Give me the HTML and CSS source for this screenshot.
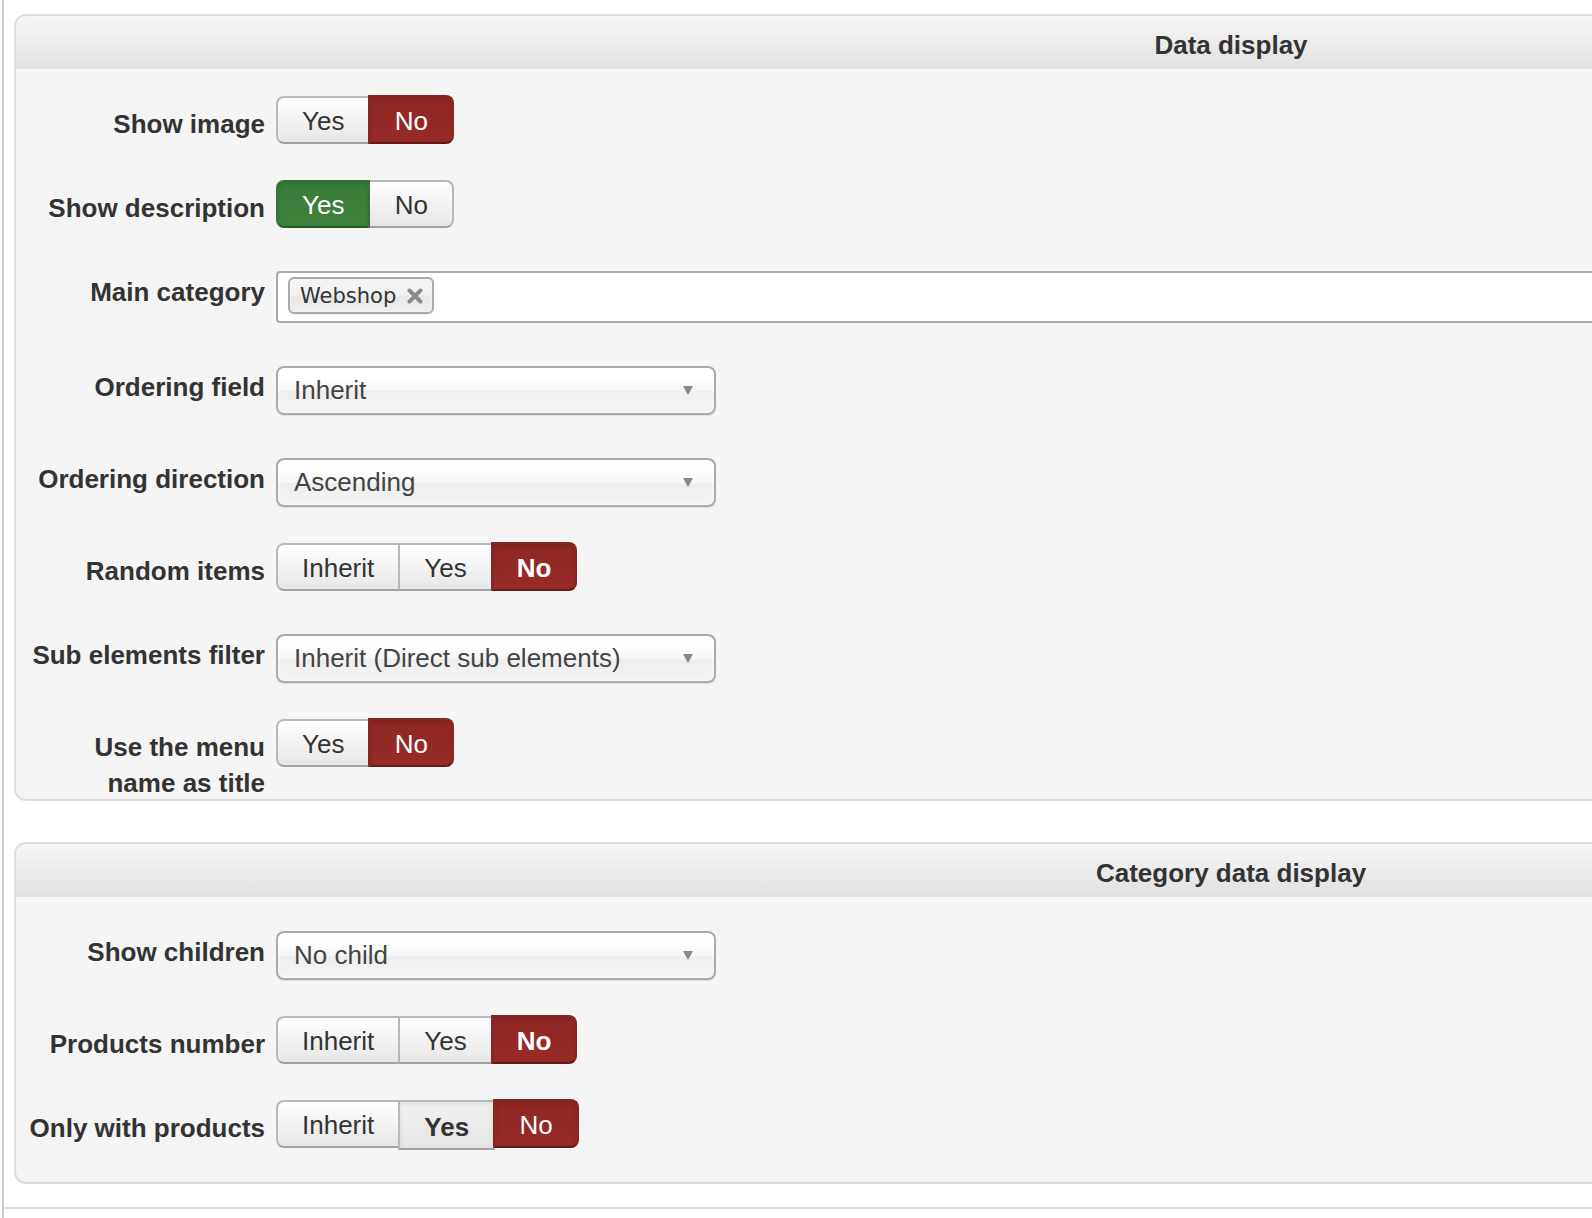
FILE: index.html
```html
<!DOCTYPE html>
<html lang="en">
<head>
<meta charset="utf-8">
<title>Menu item options</title>
<link rel="stylesheet" href="styles.css">
</head>
<body>
<div class="page">

  <section class="panel">
    <div class="panel-head">Data display</div>
    <div class="panel-body">

      <div class="row">
        <label class="row-label">Show image</label>
        <div class="btn-group">
          <span class="btn">Yes</span>
          <span class="btn btn--danger">No</span>
        </div>
      </div>

      <div class="row">
        <label class="row-label">Show description</label>
        <div class="btn-group">
          <span class="btn btn--success">Yes</span>
          <span class="btn">No</span>
        </div>
      </div>

      <div class="row">
        <label class="row-label">Main category</label>
        <div class="multi">
          <span class="tag">Webshop
            <svg class="tag-close" width="18" height="16" viewBox="0 0 18 16" aria-hidden="true">
              <path d="M3.5 2.5 L14.5 13.5 M14.5 2.5 L3.5 13.5" stroke="#8a8a8a" stroke-width="4" stroke-linecap="round" fill="none"/>
            </svg>
          </span>
        </div>
      </div>

      <div class="row">
        <label class="row-label">Ordering field</label>
        <div class="select"><span>Inherit</span><svg class="caret" width="10" height="9" viewBox="0 0 10 9" aria-hidden="true"><path d="M0 0 H10 L5 9 Z" fill="#888"/></svg></div>
      </div>

      <div class="row">
        <label class="row-label">Ordering direction</label>
        <div class="select"><span>Ascending</span><svg class="caret" width="10" height="9" viewBox="0 0 10 9" aria-hidden="true"><path d="M0 0 H10 L5 9 Z" fill="#888"/></svg></div>
      </div>

      <div class="row">
        <label class="row-label">Random items</label>
        <div class="btn-group">
          <span class="btn">Inherit</span>
          <span class="btn">Yes</span>
          <span class="btn btn--danger btn--bold">No</span>
        </div>
      </div>

      <div class="row">
        <label class="row-label">Sub elements filter</label>
        <div class="select"><span>Inherit (Direct sub elements)</span><svg class="caret" width="10" height="9" viewBox="0 0 10 9" aria-hidden="true"><path d="M0 0 H10 L5 9 Z" fill="#888"/></svg></div>
      </div>

      <div class="row row--short">
        <label class="row-label">Use the menu name as title</label>
        <div class="btn-group">
          <span class="btn">Yes</span>
          <span class="btn btn--danger">No</span>
        </div>
      </div>

    </div>
  </section>

  <section class="panel">
    <div class="panel-head">Category data display</div>
    <div class="panel-body">

      <div class="row">
        <label class="row-label">Show children</label>
        <div class="select"><span>No child</span><svg class="caret" width="10" height="9" viewBox="0 0 10 9" aria-hidden="true"><path d="M0 0 H10 L5 9 Z" fill="#888"/></svg></div>
      </div>

      <div class="row">
        <label class="row-label">Products number</label>
        <div class="btn-group">
          <span class="btn">Inherit</span>
          <span class="btn">Yes</span>
          <span class="btn btn--danger btn--bold">No</span>
        </div>
      </div>

      <div class="row">
        <label class="row-label">Only with products</label>
        <div class="btn-group">
          <span class="btn">Inherit</span>
          <span class="btn btn--active">Yes</span>
          <span class="btn btn--danger">No</span>
        </div>
      </div>

    </div>
  </section>

  <div class="page-foot"></div>
</div>
</body>
</html>
```

FILE: styles.css
```css
* {
  box-sizing: border-box;
}

html,
body {
  margin: 0;
  padding: 0;
  background: #fff;
  overflow: hidden;
}

body {
  font-family: "Liberation Sans", Arial, Helvetica, sans-serif;
  color: #333;
}

/* outer column with its grey left rule */
.page {
  width: 2500px;
  height: 1218px;
  margin-left: 2px;
  padding: 14px 0 0 10px;
  border-left: 2px solid #cdcdcd;
}

/* fieldset-like panels */
.panel {
  width: 2434px;
  border: 2px solid #ddd;
  border-radius: 12px;
  background: #f5f5f5;
  overflow: hidden;
}

.panel + .panel {
  margin-top: 41px;
}

.panel-head {
  height: 53px;
  line-height: 58px;
  text-align: center;
  font-size: 26px;
  font-weight: bold;
  color: #333;
  background: linear-gradient(#f6f6f6, #e1e1e1);
}

.panel-body {
  padding: 27px 0 32px;
}

/* one label + control line */
.row {
  display: flex;
  align-items: flex-start;
  margin-bottom: 36px;
}

.row:last-child {
  margin-bottom: 0;
}

/* the label may wrap below the control without growing the row */
.row--short {
  height: 48px;
}

.row-label {
  flex: 0 0 240px;
  margin: 0 11px 0 9px;
  padding-top: 10px;
  font-size: 26px;
  line-height: 36px;
  font-weight: bold;
  text-align: right;
  color: #333;
}

/* segmented radio buttons */
.btn-group {
  display: flex;
  align-items: flex-start;
}

.btn {
  position: relative;
  height: 48px;
  min-width: 86px;
  padding: 2px 24px 0;
  border: 2px solid #b8b8b8;
  border-bottom-color: #a2a2a2;
  background: linear-gradient(#fff, #e6e6e6);
  font-size: 26px;
  line-height: 42px;
  text-align: center;
  color: #333;
  white-space: nowrap;
}

.btn + .btn {
  margin-left: -2px;
}

.btn:first-child {
  border-radius: 8px 0 0 8px;
}

.btn:last-child {
  border-radius: 0 8px 8px 0;
}

.btn--danger {
  z-index: 1;
  height: 49px;
  margin-top: -1px;
  padding-top: 3px;
  background: linear-gradient(#8f2824, #972b26);
  border-color: #8a2622;
  border-bottom-color: #641b18;
  color: #fff;
  box-shadow: inset 0 2px 4px rgba(0, 0, 0, 0.12);
}

.btn--success {
  z-index: 1;
  background: linear-gradient(#387c38, #3c813c);
  border-color: #347234;
  border-bottom-color: #285a28;
  color: #fff;
  box-shadow: inset 0 2px 4px rgba(0, 0, 0, 0.12);
}

.btn--bold {
  font-weight: bold;
}

.btn--active {
  z-index: 1;
  height: 50px;
  padding-top: 4px;
  font-weight: bold;
  background: linear-gradient(#f1f1f1, #e4e4e4);
  box-shadow: inset 0 2px 4px rgba(0, 0, 0, 0.08);
}

/* single-choice dropdown */
.select {
  margin-top: 7px;
  width: 440px;
  height: 49px;
  display: flex;
  align-items: center;
  justify-content: space-between;
  padding: 0 21px 0 16px;
  border: 2px solid #aaa;
  border-radius: 8px;
  background: linear-gradient(#fff 20%, #f6f6f6 50%, #eee 52%, #f4f4f4 100%);
  box-shadow: inset 0 0 3px #fff, 0 1px 1px rgba(0, 0, 0, 0.1);
  font-size: 26px;
  color: #444;
  white-space: nowrap;
}

.caret {
  flex: none;
}

/* multi-choice field with tags */
.multi {
  flex: 1;
  margin-top: 7px;
  height: 52px;
  display: flex;
  align-items: flex-start;
  padding: 4px 0 0 10px;
  border: 2px solid #aaa;
  border-radius: 4px 0 0 4px;
  background: #fff;
}

.tag {
  display: flex;
  align-items: center;
  gap: 10px;
  height: 37px;
  padding: 0 8px 0 10px;
  border: 2px solid #aaa;
  border-radius: 6px;
  background: linear-gradient(#f4f4f4 20%, #f0f0f0 50%, #e8e8e8 52%, #eee 100%);
  box-shadow: inset 0 0 2px #fff, 0 1px 0 rgba(0, 0, 0, 0.05);
  font-family: "DejaVu Sans", Verdana, sans-serif;
  font-size: 21px;
  color: #333;
}

.tag-close {
  flex: none;
}

.page-foot {
  margin: 23px 0 0 -10px;
  border-top: 2px solid #ddd;
}
```
